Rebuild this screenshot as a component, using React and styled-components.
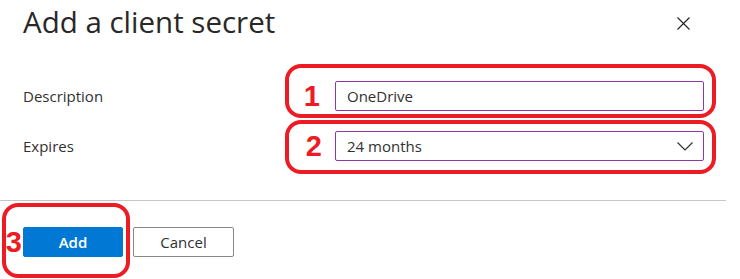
import React from "react";
import styled, { createGlobalStyle } from "styled-components";

const Global = createGlobalStyle`
  html, body { margin: 0; padding: 0; background: #ffffff; }
  body { font-family: "Segoe UI", "Open Sans", "Noto Sans", sans-serif; color: #323130; }
  * { box-sizing: border-box; }
`;

const Panel = styled.div`
  width: 740px;
  height: 279px;
  overflow: hidden;
  background: #fff;
  display: flex;
  flex-direction: column;
`;

const Header = styled.header`
  display: flex;
  justify-content: space-between;
  align-items: flex-start;
  padding: 4px 50px 0 23px;
`;

const Title = styled.h1`
  margin: 0;
  font-size: 29.5px;
  line-height: 36px;
  font-weight: 400;
  color: #292827;
`;

const CloseButton = styled.button`
  margin-top: 13px;
  width: 13px;
  height: 13px;
  padding: 0;
  border: 0;
  background: transparent;
  display: flex;
  cursor: pointer;
`;

const Form = styled.div`
  display: grid;
  grid-template-columns: 312px 369px;
  row-gap: 20px;
  padding: 41px 0 0 23px;
  align-items: center;
`;

const Label = styled.label`
  font-size: 15px;
  line-height: 30px;
  color: #323130;
`;

const FieldCell = styled.div`
  position: relative;
  height: 30px;
`;

const TextInput = styled.input`
  width: 100%;
  height: 30px;
  border: 1px solid #8a3aa8;
  border-radius: 2px;
  padding: 0 11px;
  font-family: inherit;
  font-size: 15px;
  color: #323130;
  background: #fff;
  outline: none;
`;

const Select = styled.div`
  width: 100%;
  height: 30px;
  border: 1px solid #8a3aa8;
  border-radius: 2px;
  padding: 0 10px 0 11px;
  font-size: 15px;
  display: flex;
  align-items: center;
  justify-content: space-between;
  color: #323130;
`;

const Callout = styled.div`
  position: absolute;
  top: ${(p) => p.$top}px;
  left: ${(p) => p.$left}px;
  right: ${(p) => p.$right}px;
  bottom: ${(p) => p.$bottom}px;
  border: 4px solid #ed1c24;
  border-radius: 16px;
  pointer-events: none;
`;

const StepNumber = styled.span`
  position: absolute;
  top: 50%;
  right: calc(100% + ${(p) => p.$gap}px);
  transform: translateY(-50%);
  font-family: "Liberation Sans", Arial, sans-serif;
  font-weight: 700;
  font-size: 29px;
  line-height: 29px;
  color: #ed1c24;
`;

const Divider = styled.hr`
  margin: 39px 0 0 0;
  width: 726px;
  height: 1px;
  border: 0;
  background: #c8c6c4;
`;

const Footer = styled.footer`
  display: flex;
  gap: 10px;
  padding: 26px 0 0 23px;
`;

const Anchor = styled.div`
  position: relative;
  display: flex;
`;

const Button = styled.button`
  height: 30px;
  width: ${(p) => p.$width}px;
  border-radius: 2px;
  font-family: inherit;
  font-size: 15px;
  cursor: pointer;
  padding: 0;
  border: 1px solid ${(p) => (p.$primary ? "#0078d4" : "#8a8886")};
  background: ${(p) => (p.$primary ? "#0078d4" : "#ffffff")};
  color: ${(p) => (p.$primary ? "#ffffff" : "#323130")};
  font-weight: ${(p) => (p.$primary ? 600 : 400)};
`;

export default function App() {
  return (
    <>
      <Global />
      <Panel>
        <Header>
          <Title>Add a client secret</Title>
          <CloseButton aria-label="Close">
            <svg width="13" height="13" viewBox="0 0 13 13">
              <path d="M0.5 0.5 L12.5 12.5 M12.5 0.5 L0.5 12.5" stroke="#201f1e" strokeWidth="1.1" fill="none" />
            </svg>
          </CloseButton>
        </Header>
        <Form>
          <Label>Description</Label>
          <FieldCell>
            <TextInput defaultValue="OneDrive" />
            <StepNumber $gap={15}>1</StepNumber>
            <Callout $top={-17} $left={-50} $right={-12} $bottom={-7} />
          </FieldCell>
          <Label>Expires</Label>
          <FieldCell>
            <Select>
              <span>24 months</span>
              <svg width="16" height="9" viewBox="0 0 16 9">
                <path d="M0.5 0.5 L8 8 L15.5 0.5" stroke="#323130" strokeWidth="1.2" fill="none" />
              </svg>
            </Select>
            <StepNumber $gap={13}>2</StepNumber>
            <Callout $top={-11} $left={-50} $right={-12} $bottom={-13} />
          </FieldCell>
        </Form>
        <Divider />
        <Footer>
          <Anchor>
            <Button $primary $width={100}>Add</Button>
            <StepNumber $gap={1}>3</StepNumber>
            <Callout $top={-24} $left={-21} $right={-7} $bottom={-21} />
          </Anchor>
          <Button $width={101}>Cancel</Button>
        </Footer>
      </Panel>
    </>
  );
}
